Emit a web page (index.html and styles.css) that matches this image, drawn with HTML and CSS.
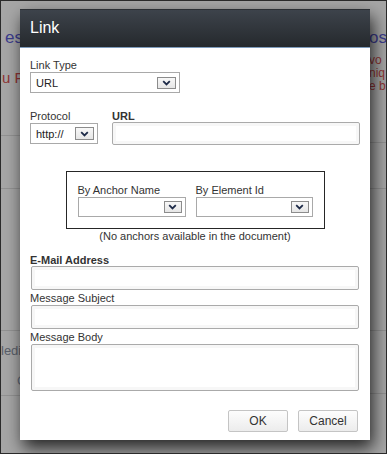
FILE: index.html
```html
<!DOCTYPE html>
<html lang="en">
<head>
  <meta charset="UTF-8">
  <meta name="viewport" content="width=device-width, initial-scale=1.0">
  <title>Link</title>
  <link rel="stylesheet" href="styles.css">
</head>
<body>
  <div class="screen">
    <div class="page">
      <div class="page-col page-left">
        <div class="pg-title">es</div>
        <div class="pg-red pg-red-left">u F</div>
        <div class="pg-line pg-line-a"></div>
        <div class="pg-line pg-line-b"></div>
        <div class="pg-line pg-line-c"></div>
        <div class="pg-muted">ledia</div>
        <div class="pg-muted pg-muted-c">C</div>
        <div class="pg-line pg-line-d"></div>
      </div>
      <div class="page-col page-right">
        <div class="pg-title">os</div>
        <div class="pg-red pg-red-right">
          <div>vo</div>
          <div>niq</div>
          <div>e b</div>
        </div>
        <div class="pg-line pg-line-ra"></div>
        <div class="pg-line pg-line-rb"></div>
        <div class="pg-line pg-line-rc"></div>
        <div class="pg-line pg-line-rd"></div>
      </div>
    </div>

    <div class="dialog">
      <div class="dialog-head">Link</div>
      <div class="dialog-body">
        <div class="label">Link Type</div>
        <div class="select select-type">
          <span>URL</span>
          <span class="arrow"><svg width="9" height="6" viewBox="0 0 9 6"><path d="M1.2 1.2 L4.5 4.4 L7.8 1.2" fill="none" stroke="#1d2a48" stroke-width="1.8"/></svg></span>
        </div>

        <div class="url-row">
          <div class="protocol">
            <div class="label">Protocol</div>
            <div class="select select-protocol">
              <span>http://</span>
              <span class="arrow"><svg width="9" height="6" viewBox="0 0 9 6"><path d="M1.2 1.2 L4.5 4.4 L7.8 1.2" fill="none" stroke="#1d2a48" stroke-width="1.8"/></svg></span>
            </div>
          </div>
          <div class="url">
            <div class="label label-bold label-url">URL</div>
            <div class="input input-url"></div>
          </div>
        </div>

        <div class="anchors">
          <div class="anchor-group anchor-name">
            <div class="label">By Anchor Name</div>
            <div class="select select-anchor">
              <span></span>
              <span class="arrow"><svg width="9" height="6" viewBox="0 0 9 6"><path d="M1.2 1.2 L4.5 4.4 L7.8 1.2" fill="none" stroke="#1d2a48" stroke-width="1.8"/></svg></span>
            </div>
          </div>
          <div class="anchor-group anchor-id">
            <div class="label">By Element Id</div>
            <div class="select select-anchor">
              <span></span>
              <span class="arrow"><svg width="9" height="6" viewBox="0 0 9 6"><path d="M1.2 1.2 L4.5 4.4 L7.8 1.2" fill="none" stroke="#1d2a48" stroke-width="1.8"/></svg></span>
            </div>
          </div>
        </div>
        <div class="note">(No anchors available in the document)</div>

        <div class="label label-bold label-mail">E-Mail Address</div>
        <div class="input"></div>
        <div class="label label-field">Message Subject</div>
        <div class="input"></div>
        <div class="label label-field">Message Body</div>
        <div class="input textarea"></div>

        <div class="buttons">
          <button class="btn">OK</button>
          <button class="btn">Cancel</button>
        </div>
      </div>
    </div>
  </div>
</body>
</html>
```

FILE: styles.css
```css
html, body {
  margin: 0;
  padding: 0;
}
body {
  font-family: "Liberation Sans", Arial, sans-serif;
  background: #a5a5a5;
}
.screen {
  position: relative;
  width: 387px;
  height: 454px;
  box-sizing: border-box;
  border: 1px solid #2a2a2a;
  background: #a6a6a6;
  overflow: hidden;
}

/* page behind the overlay */
.page {
  display: flex;
  justify-content: space-between;
  height: 100%;
}
.page-col {
  white-space: nowrap;
}
.page-left {
  width: 40px;
}
.page-right {
  width: 17px;
  overflow: hidden;
}
.pg-title {
  margin-top: 27px;
  font-size: 17px;
  line-height: 20px;
  color: #3d3d8e;
}
.page-left .pg-title {
  padding-left: 4px;
}
.pg-red {
  color: #8e3434;
}
.pg-red-left {
  margin-top: 21px;
  padding-left: 1px;
  font-size: 15px;
  line-height: 18px;
}
.pg-red-right {
  margin-top: 6px;
  font-size: 12px;
  line-height: 13px;
}
.pg-line {
  height: 1px;
  background: #929292;
}
.page-left .pg-line {
  width: 20px;
}
.pg-line-a { margin-top: 48px; }
.pg-line-b { margin-top: 52px; }
.pg-line-c { margin-top: 141px; }
.pg-line-d { margin-top: 6px; }
.pg-line-ra { margin-top: 49px; }
.pg-line-rb { margin-top: 45px; }
.pg-line-rc { margin-top: 141px; }
.pg-line-rd { margin-top: 62px; }
.pg-muted {
  margin-top: 12px;
  font-size: 13px;
  line-height: 16px;
  color: #5a5f6a;
}
.pg-muted-c {
  margin-top: 14px;
  padding-left: 16px;
  color: #5d6676;
}

/* dialog */
.dialog {
  position: absolute;
  left: 19px;
  top: 8px;
  width: 350px;
  height: 431px;
  background: #fff;
  box-shadow: 3px 8px 16px rgba(0, 0, 0, 0.78);
}
.dialog-head {
  height: 39px;
  box-sizing: border-box;
  border-top: 1px solid #2b2f34;
  border-bottom: 1px solid #7d9bbb;
  background: linear-gradient(#3d434b, #25292d);
  color: #fff;
  font-size: 16px;
  line-height: 36px;
  padding-left: 10px;
}
.dialog-body {
  padding: 11px 10px 0 10px;
}
.label {
  font-size: 11px;
  line-height: 13px;
  color: #333;
}
.label-bold {
  font-weight: bold;
}

.select {
  display: flex;
  align-items: center;
  justify-content: space-between;
  box-sizing: border-box;
  border: 1px solid #a9a9a9;
  background: #fff;
  font-size: 11px;
  color: #222;
  padding-left: 5px;
  padding-right: 3px;
}
.select-type {
  width: 150px;
  height: 21px;
}
.arrow {
  display: flex;
  align-items: center;
  justify-content: center;
  width: 19px;
  height: 12px;
  box-sizing: border-box;
  border: 1px solid #8c8c8c;
  background: linear-gradient(#f8f8f8, #e6e6e6);
}

.url-row {
  display: flex;
  margin-top: 17px;
}
.select-protocol {
  width: 68px;
  height: 21px;
}
.select-protocol .arrow {
  height: 13px;
}
.url {
  flex: 1;
  margin-left: 14px;
}
.label-url {
  line-height: 12px;
}
.input {
  box-sizing: border-box;
  height: 24px;
  margin-left: 1px;
  margin-right: 1px;
  border: 1px solid #aaa;
  border-radius: 2px;
  background: #fff;
  box-shadow: inset 0 0 0 3px #f7f7f7;
}
.input-url {
  height: 23px;
  margin-left: 0;
  margin-right: 0;
}

.anchors {
  display: flex;
  gap: 10px;
  width: 259px;
  box-sizing: border-box;
  margin: 26px auto 0;
  border: 1px solid #262626;
  padding: 12px 11px 11px 11px;
}
.anchor-name {
  width: 108px;
}
.anchor-id {
  width: 117px;
}
.select-anchor {
  height: 20px;
}
.select-anchor .arrow {
  width: 18px;
}
.note {
  margin-top: 1px;
  text-align: center;
  font-size: 11px;
  line-height: 13px;
  color: #333;
}

.label-mail {
  margin-top: 11px;
  line-height: 12px;
}
.label-field {
  margin-top: 1px;
  line-height: 14px;
}
.textarea {
  height: 47px;
}

.buttons {
  display: flex;
  justify-content: flex-end;
  gap: 10px;
  margin-top: 19px;
  margin-right: 2px;
}
.btn {
  width: 60px;
  height: 22px;
  padding: 0;
  border: 1px solid #c4c4c4;
  border-radius: 2px;
  background: linear-gradient(#fdfdfd, #ececec);
  font-family: "Liberation Sans", Arial, sans-serif;
  font-size: 12px;
  color: #333;
}
```
